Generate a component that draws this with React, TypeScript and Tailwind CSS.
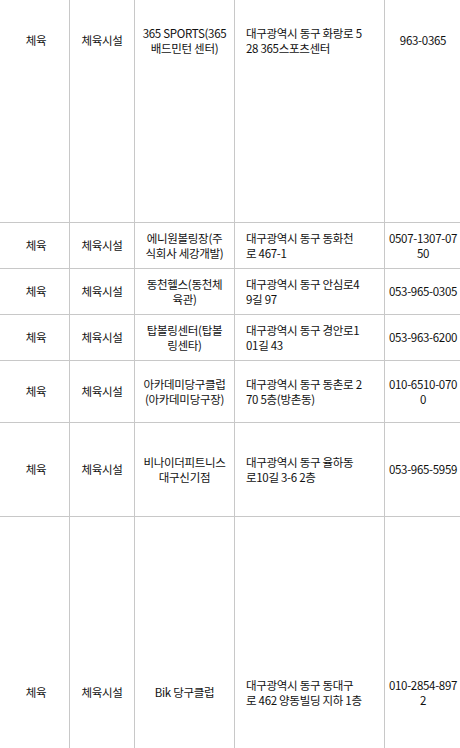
import React from 'react';

// Sports-facility listing, scrolled part-way down the page. Cell text is
// given line by line so the wrap points match the source table.

type Row = {
  height: number;
  name: string[];
  address: string[];
  phone: string[];
};

const rows: Row[] = [
  {
    height: 364,
    name: ['365 SPORTS(365', '배드민턴 센터)'],
    address: ['대구광역시 동구 화랑로 5', '28 365스포츠센터'],
    phone: ['963-0365'],
  },
  {
    height: 46,
    name: ['에니원볼링장(주', '식회사 세강개발)'],
    address: ['대구광역시 동구 동화천', '로 467-1'],
    phone: ['0507-1307-07', '50'],
  },
  {
    height: 46,
    name: ['동천헬스(동천체', '육관)'],
    address: ['대구광역시 동구 안심로4', '9길 97'],
    phone: ['053-965-0305'],
  },
  {
    height: 46,
    name: ['탑볼링센터(탑볼', '링센타)'],
    address: ['대구광역시 동구 경안로1', '01길 43'],
    phone: ['053-963-6200'],
  },
  {
    height: 62,
    name: ['아카데미당구클럽', '(아카데미당구장)'],
    address: ['대구광역시 동구 동촌로 2', '70 5층(방촌동)'],
    phone: ['010-6510-070', '0'],
  },
  {
    height: 94,
    name: ['비나이더피트니스', '대구신기점'],
    address: ['대구광역시 동구 율하동', '로10길 3-6 2층'],
    phone: ['053-965-5959'],
  },
  {
    height: 352,
    name: ['Bik 당구클럽'],
    address: ['대구광역시 동구 동대구', '로 462 양동빌딩 지하 1층'],
    phone: ['010-2854-897', '2'],
  },
];

function Lines({ lines }: { lines: string[] }) {
  return (
    <>
      {lines.map((l, i) => (
        <span key={i} className="block whitespace-nowrap">
          {l}
        </span>
      ))}
    </>
  );
}

const cell = 'flex flex-col justify-center border-r border-[#c8c8c8]';

export default function App() {
  return (
    <div
      className="h-[748px] w-[460px] overflow-hidden bg-white text-[11.5px] leading-[15px] tracking-[-0.3px] text-[#111111]"
      style={{ fontFamily: '"Noto Sans CJK KR", "Noto Sans", sans-serif' }}
    >
      <div className="-mt-[141px] w-[540px]">
        {rows.map((r, i) => (
          <div
            key={i}
            className="flex border-b border-[#c8c8c8]"
            style={{ height: r.height }}
          >
            <div className={cell + ' w-[70px] items-center pl-[3px]'}>체육</div>
            <div className={cell + ' w-[65px] items-center'}>체육시설</div>
            <div className={cell + ' w-[100px] items-center text-center'}>
              <Lines lines={r.name} />
            </div>
            <div className={cell + ' w-[150px] pl-[11px]'}>
              <Lines lines={r.address} />
            </div>
            <div className={cell + ' w-[77px] items-center text-center'}>
              <Lines lines={r.phone} />
            </div>
          </div>
        ))}
      </div>
    </div>
  );
}
